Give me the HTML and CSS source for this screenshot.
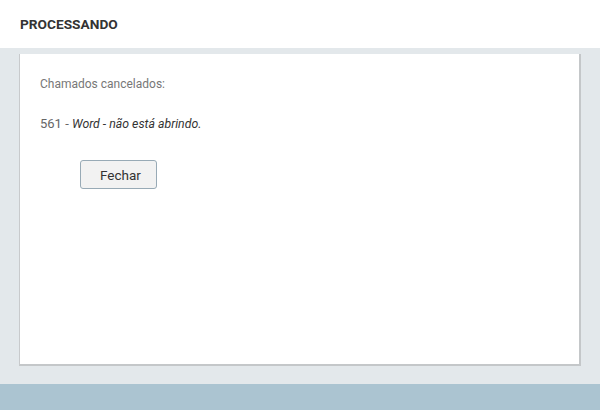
FILE: index.html
```html
<!DOCTYPE html>
<html lang="pt-BR">
    <head>
        <meta charset="UTF-8" />
        <meta name="viewport" content="width=device-width, initial-scale=1.0" />
        <title>Processando</title>
        <link rel="stylesheet" href="styles.css">
    </head>
    <body>
        <div id="page">
            <header class="topbar">
                <h1 class="title">PROCESSANDO</h1>
            </header>
            <main class="content">
                <section class="card">
                    <p class="label">Chamados cancelados:</p>
                    <ul class="list">
                        <li class="item"><span class="num">561 -</span> <em class="desc">Word - não está abrindo.</em></li>
                    </ul>
                    <div class="actions">
                        <button class="btn" type="button">Fechar</button>
                    </div>
                </section>
            </main>
            <footer class="bottombar"></footer>
        </div>
    </body>
</html>
```

FILE: styles.css
```css
* {
    margin: 0;
    padding: 0;
    box-sizing: border-box;
}

body {
    font-family: Roboto, "Liberation Sans", sans-serif;
    font-size: 13px;
    color: #333;
    background: #e3e8eb;
}

#page {
    display: flex;
    flex-direction: column;
    width: 600px;
    height: 410px;
}

.topbar {
    height: 48px;
    background: #fff;
    display: flex;
    align-items: center;
    padding-left: 20px;

    .title {
        font-size: 13.7px;
        font-weight: 700;
        color: #333;
        padding-bottom: 1px;
    }
}

.content {
    flex: 1;
    padding: 6px 19px 0 19px;
}

.card {
    height: 312px;
    background: #fff;
    border-left: 1px solid #c8cacc;
    border-right: 2px solid #c4c7c9;
    border-bottom: 2px solid #c4c7c9;
    padding: 22px 20px 0 20px;

    .label {
        font-size: 12px;
        color: #777;
        line-height: 16px;
    }

    .list {
        list-style: none;
        margin-top: 24px;
        line-height: 16px;
        .num {
            color: #666;
        }
        .desc {
            font-size: 12.3px;
        }
    }

    .actions {
        margin-top: 28px;
        padding-left: 40px;
    }

    .btn {
        width: 77px;
        height: 29px;
        font: inherit;
        font-size: 13.5px;
        color: #333;
        background: #f2f2f2;
        border: 1px solid #98aab6;
        border-radius: 3px;
        padding-left: 4px;
    }
}

.bottombar {
    height: 26px;
    background: #abc4d1;
}
```
